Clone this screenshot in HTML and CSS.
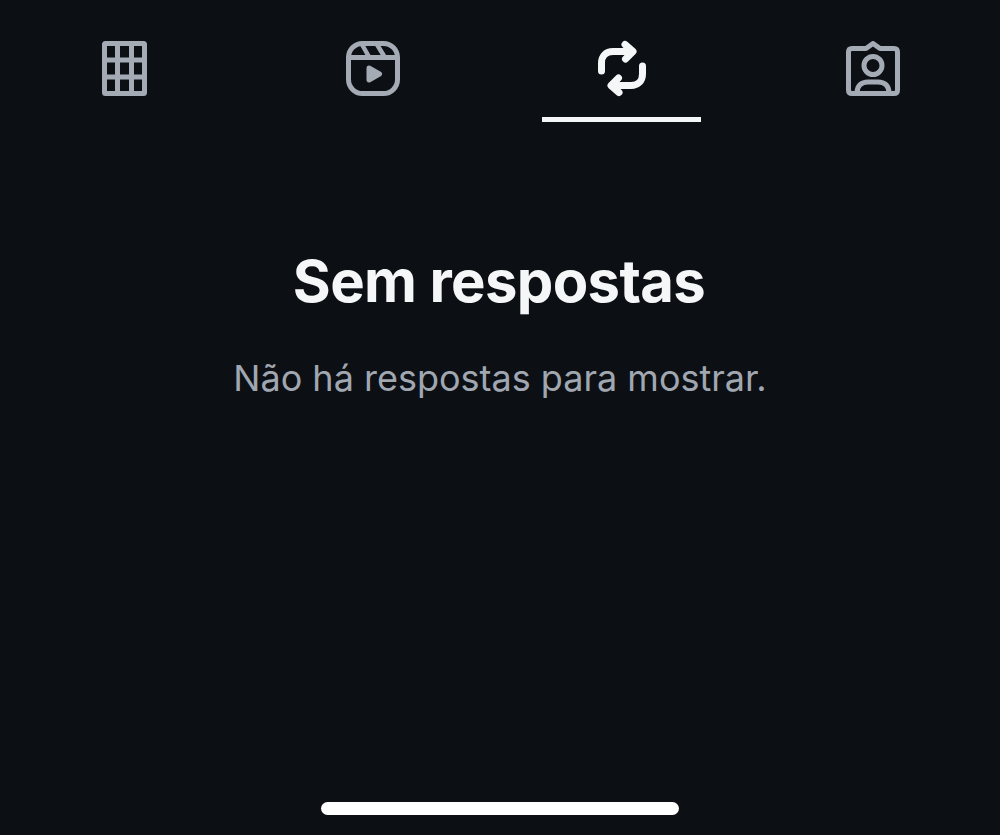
FILE: index.html
```html
<!DOCTYPE html>
<html lang="pt">
<head>
    <meta charset="UTF-8">
    <meta name="viewport" content="width=device-width, initial-scale=1.0">
    <title>Sem respostas</title>
    <link rel="stylesheet" href="styles.css">
</head>
<body>
    <div class="screen">
        <nav class="tabs">
            <div class="tab">
                <svg class="icon" width="45" height="55" viewBox="0 0 45 55" fill="none" stroke="#a4abb5" stroke-width="5" stroke-linejoin="round">
                    <rect x="2.5" y="2.5" width="40" height="50" rx="1"/>
                    <path d="M15.500 3V52M29.500 3V52M3 19H42M3 36H42"/>
                </svg>
            </div>
            <div class="tab">
                <svg class="icon" width="54" height="55" viewBox="0 0 54 55" fill="none" stroke="#a4abb5" stroke-width="5" stroke-linecap="round" stroke-linejoin="round">
                    <rect x="2.500" y="2.500" width="49" height="50" rx="14"/>
                    <path d="M3 16.500H51"/>
                    <path d="M16 3.500L22.500 15M31 3.500L38 15" stroke-width="4.500"/>
                    <path d="M23 27L33.500 33L23 39Z" fill="#a4abb5"/>
                </svg>
            </div>
            <div class="tab tab-active">
                <svg class="icon" width="48" height="57" viewBox="0 0 48 57" fill="none" stroke="#f5f6f7" stroke-width="7" stroke-linecap="round" stroke-linejoin="round">
                    <path d="M3.500 31V23C3.500 16 8 11.500 15 11.500H34"/>
                    <path d="M27 4.500L35 11.500L27.500 19"/>
                    <path d="M44.500 26V34C44.500 41 40 45.500 33 45.500H14"/>
                    <path d="M21 52.500L13 45.500L20.500 38"/>
                </svg>
            </div>
            <div class="tab">
                <svg class="icon" width="54" height="55" viewBox="0 0 54 55" fill="none" stroke="#a4abb5" stroke-width="5" stroke-linejoin="round">
                    <path d="M6 7.500H20L27 2.500L34 7.500H48C50.500 7.500 51.500 8.500 51.500 11V49C51.500 51.500 50.500 52.500 48 52.500H6C3.500 52.500 2.500 51.500 2.500 49V11C2.500 8.500 3.500 7.500 6 7.500Z"/>
                    <circle cx="27" cy="24.500" r="9"/>
                    <path d="M11 52C11 45 15 41 22 41H32C39 41 43 45 43 52"/>
                </svg>
            </div>
        </nav>

        <main class="empty">
            <h1 class="empty-title">Sem respostas</h1>
            <p class="empty-text">Não há respostas para mostrar.</p>
        </main>

        <div class="home-bar"></div>
    </div>
</body>
</html>
```

FILE: styles.css
```css
html, body {
    margin: 0;
    padding: 0;
    height: 100%;
    background: #0c1015;
    font-family: 'Inter', 'Liberation Sans', sans-serif;
}

.screen {
    height: 835px;
    display: flex;
    flex-direction: column;
    align-items: center;
    overflow: hidden;
}

.tabs {
    width: 100%;
    display: grid;
    grid-template-columns: 249px 248px 250px 252px;
}

.tab {
    height: 122px;
    box-sizing: border-box;
    padding-top: 41px;
    display: flex;
    justify-content: center;
    position: relative;
}

.tab-active {
    padding-top: 40px;
}

.tab-active::after {
    content: "";
    position: absolute;
    left: 45px;
    bottom: 0;
    width: 159px;
    height: 5px;
    background: #f5f6f7;
}

.icon {
    display: block;
}

.empty {
    flex: 1;
    text-align: center;
    padding-top: 123px;
}

.empty-title {
    margin: 0;
    padding-right: 2px;
    font-size: 58px;
    line-height: 72px;
    font-weight: 700;
    letter-spacing: -0.65px;
    color: #f5f6f7;
}

.empty-text {
    margin: 37px 0 0;
    font-size: 36px;
    line-height: 48px;
    font-weight: 400;
    color: #a0a7b1;
}

.home-bar {
    width: 358px;
    height: 13px;
    margin-bottom: 20px;
    border-radius: 7px;
    background: #ffffff;
}
```
